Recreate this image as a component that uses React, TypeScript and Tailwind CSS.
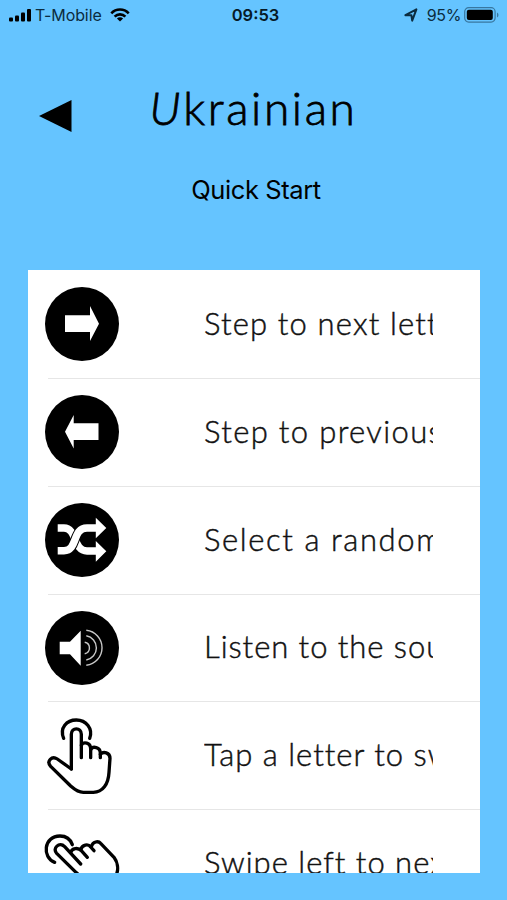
import type { ReactNode } from 'react'

function Disc({ children }: { children: ReactNode }) {
  return (
    <svg viewBox="0 0 74 74" className="size-[74px] shrink-0">
      <circle cx="37" cy="37" r="37" fill="#000" />
      {children}
    </svg>
  )
}

function NextIcon() {
  return (
    <Disc>
      <path d="M20 28.2H45V19L54 36.8L45 54V45H20Z" fill="#fff" />
    </Disc>
  )
}

function PreviousIcon() {
  return (
    <Disc>
      <path d="M53.5 28.2H28.7V20L20 36.8L28.7 53.5V45H53.5Z" fill="#fff" />
    </Disc>
  )
}

function ShuffleIcon() {
  return (
    <Disc>
      <g fill="none" stroke="#fff" strokeWidth="7.4">
        <path d="M12.7 25H19C32 25 28 48 42 48H52" />
        <path d="M19 47.7C33 47.7 27 25 42 25" stroke="#000" strokeWidth="9.5" />
        <path d="M12.7 47.7H19C33 47.7 27 25 42 25H52" />
      </g>
      <path d="M50.8 14.7L61.3 25L50.8 35.3ZM50.8 38L61.3 48.3L50.8 58.7Z" fill="#fff" />
    </Disc>
  )
}

function SoundIcon() {
  return (
    <Disc>
      <path d="M14.7 30.7H25L35.7 19.7V54.7L25 43.3H14.7Z" fill="#fff" />
      <g fill="none" stroke="#c8c8c8" strokeWidth="1.4">
        <path d="M39.7 31.3A5.8 5.8 0 0 1 39.7 42.7" />
        <path d="M41.3 24.8A12.3 12.3 0 0 1 41.3 49" />
        <path d="M41.3 19.2A17.6 17.6 0 0 1 41.3 54.2" />
      </g>
    </Disc>
  )
}

function TapIcon() {
  return (
    <svg
      viewBox="15 42 222 222"
      className="size-[74px] shrink-0 overflow-visible"
      fill="none"
      stroke="#000"
      strokeWidth="10"
      strokeLinecap="round"
      strokeLinejoin="round"
    >
      <path d="M71 100C58 68 80 45 109 45C138 45 160 70 149 100" />
      <path d="M94 192V88C94 66 124 66 124 88V158" />
      <path d="M124 121C130 109 152 112 152 132V158" />
      <path d="M152 134C158 122 181 126 181 144V158" />
      <path d="M181 148C190 138 210 142 210 160L207 202C205 238 188 262 160 262H130C112 262 100 250 92 243L32 184C18 168 36 151 52 162L94 192" />
    </svg>
  )
}

function SwipeIcon() {
  return (
    <svg
      viewBox="75 81 222 222"
      className="size-[74px] shrink-0 overflow-visible"
      fill="none"
      stroke="#000"
      strokeWidth="10"
      strokeLinecap="round"
      strokeLinejoin="round"
    >
      <path d="M104 187C66 173 70 108 120 108C142 108 152 120 157 134" />
      <path d="M171 220L110 160C96 145 118 124 134 140L182 192" />
      <path d="M152 158C155 143 175 142 184 152L202 172" />
      <path d="M182 150C186 133 205 131 212 141L222 152" />
      <path d="M214 140C218 124 235 122 242 130L282 172C292 185 296 205 290 222L270 280L190 240L171 220" />
    </svg>
  )
}

const steps = [
  { label: 'Step to next letter', icon: <NextIcon />, tracking: 'tracking-[1.15px]' },
  { label: 'Step to previous', icon: <PreviousIcon />, tracking: 'tracking-[1.35px]' },
  { label: 'Select a random', icon: <ShuffleIcon />, tracking: 'tracking-[1.6px]' },
  { label: 'Listen to the sound', icon: <SoundIcon />, tracking: 'tracking-[0.95px]' },
  { label: 'Tap a letter to switch', icon: <TapIcon />, tracking: 'tracking-[1px]' },
  { label: 'Swipe left to next', icon: <SwipeIcon />, tracking: 'tracking-[1px]' },
]

function StatusBar() {
  return (
    <div className="grid h-[30px] grid-cols-3 items-center pl-[9px] pr-[8px] text-[16px] text-[#0b2c40]">
      <div className="flex items-center">
        <svg viewBox="0 0 22 13" className="h-[13px] w-[22px]" fill="#000">
          <rect x="0" y="8.5" width="4" height="4" rx="1" />
          <rect x="6" y="6.5" width="4" height="6" rx="1" />
          <rect x="12" y="3.5" width="4" height="9" rx="1" />
          <rect x="18" y="0" width="4" height="12.5" rx="1" />
        </svg>
        <span className="ml-[4px] whitespace-nowrap tracking-[-0.1px]">T-Mobile</span>
        <svg viewBox="0 0 20 14" className="ml-[8px] h-[14px] w-[20px] shrink-0" fill="none" stroke="#000" strokeWidth="2.6">
          <path d="M1.3 5.3C6 0.3 14 0.3 18.7 5.3" />
          <path d="M4.6 8.6C7.6 5.6 12.4 5.6 15.4 8.6" />
          <path d="M6.9 10.4C8.7 8.9 11.3 8.9 13.1 10.4L10 13.6Z" fill="#000" stroke="none" />
        </svg>
      </div>
      <div className="pl-[3px] text-center text-[16.5px] font-semibold text-[#061a27]">09:53</div>
      <div className="flex items-center justify-end">
        <svg viewBox="0 0 14 14" className="size-[14px]" fill="none" stroke="#0b2c40" strokeWidth="2" strokeLinejoin="round">
          <path d="M1.4 7.2L12.4 1.4L8.2 12.6L7.4 7.2Z" />
        </svg>
        <span className="ml-[9px] tracking-[-0.4px]">95%</span>
        <svg viewBox="0 0 35 16" className="ml-[3px] h-[16px] w-[35px]">
          <rect x="0.7" y="0.7" width="30.4" height="14.4" rx="4" fill="none" stroke="#3877a0" strokeWidth="1.2" />
          <rect x="2.8" y="2.8" width="26" height="10.2" rx="2" fill="#000" />
          <path d="M33 5.5C35 6.5 35 9.5 33 10.5Z" fill="#3877a0" />
        </svg>
      </div>
    </div>
  )
}

export default function App() {
  return (
    <div className="flex h-[900px] w-[507px] flex-col overflow-hidden bg-[#65c4ff] font-['Inter',sans-serif] text-black">
      <StatusBar />

      <header className="grid h-[240px] shrink-0 grid-cols-[150px_207px_150px] grid-rows-[140px_40px] pt-[10px]">
        <button className="flex items-center pl-[39px] pt-[11px]" aria-label="Back">
          <svg viewBox="0 0 33 32" className="h-[32px] w-[33px]">
            <path d="M0 16L32.5 0V32Z" fill="#000" />
          </svg>
        </button>
        <h1 className="flex items-center justify-center whitespace-nowrap pb-[4px] font-['Papyrus','Lato',sans-serif] text-[46px] font-light leading-none tracking-[2.6px] [-webkit-text-stroke:0.8px_#000]">
          <span className="italic">U</span>krainian
        </h1>
        <h2 className="col-span-3 row-start-2 -mt-[10px] pl-[5px] text-center text-[25.5px] leading-[40px] tracking-[-0.4px]">
          Quick Start
        </h2>
      </header>

      <ul className="ml-[28px] h-[603px] w-[452px] shrink-0 overflow-hidden bg-white pt-px">
        {steps.map((step) => (
          <li key={step.label} className="flex h-[107.85px] flex-col">
            <div className="flex flex-1 items-center pl-[17px]">
              {step.icon}
              <div
                className={`ml-[85px] w-[229px] overflow-hidden whitespace-nowrap pb-[3px] font-['Lato',sans-serif] text-[31px] font-light leading-[44px] text-[#111] [-webkit-text-stroke:0.45px_#111] ${step.tracking}`}
              >
                {step.label}
              </div>
            </div>
            <div className="ml-[20px] h-px bg-[#e6e6e6]" />
          </li>
        ))}
      </ul>
    </div>
  )
}
